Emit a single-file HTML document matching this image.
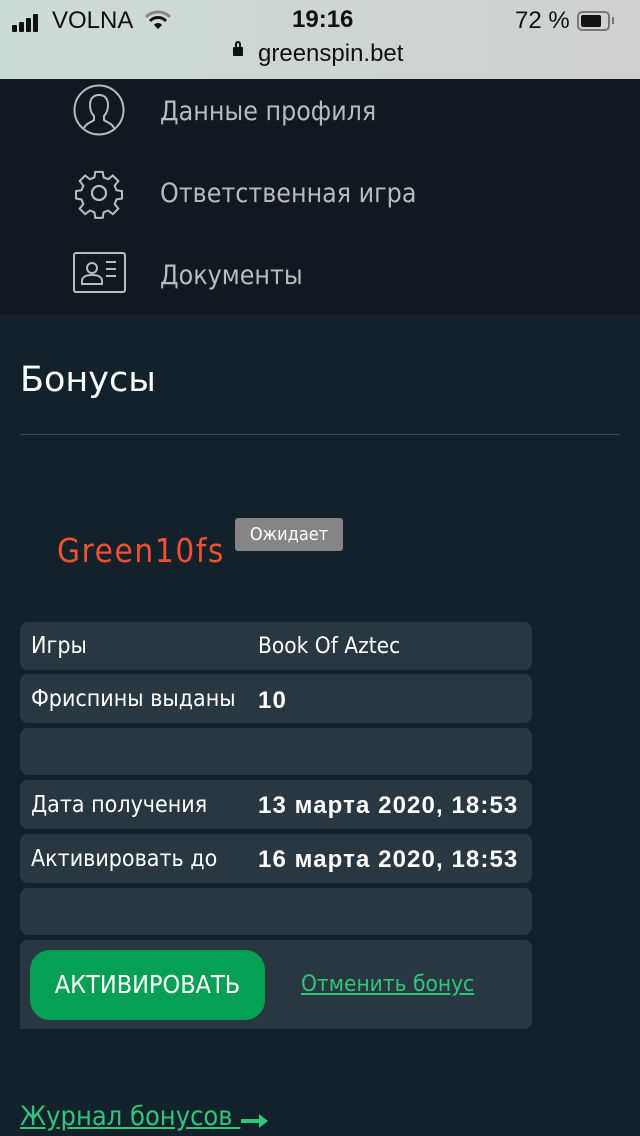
<!DOCTYPE html>
<html><head><meta charset="utf-8"><style>
*{margin:0;padding:0;box-sizing:border-box}
body{width:640px;height:1136px;overflow:hidden;background:#12212a;font-family:"Liberation Sans","DejaVu Sans",sans-serif;position:relative;color:#fff}
.status{position:absolute;left:0;top:0;width:640px;height:79px;background:linear-gradient(90deg,#cddbd6,#d0d0d0);color:#111}
.menu{position:absolute;top:79px;left:0;width:640px;height:235px;background:#111820}
.mi{position:absolute;left:160px;font-family:"DejaVu Sans Condensed","DejaVu Sans",sans-serif;font-size:26.5px;color:#b8bcbf}
.ico{position:absolute;left:73px}
.row{position:absolute;left:20px;width:512px;background:#293740;border-radius:8px}
.lab{position:absolute;left:11px;font-family:"DejaVu Sans Condensed",sans-serif;font-size:23px;color:#fff}
.val{position:absolute;left:238px;font-size:22px;color:#fff;white-space:nowrap}
.b{font-weight:bold;font-family:"Liberation Sans",sans-serif;font-size:24px;letter-spacing:1.1px}
a{color:#2fc57c;text-decoration:underline}
</style></head><body>
<div class="status">
 <div style="position:absolute;left:12px;top:14px;display:flex;align-items:flex-end;gap:2px">
  <div style="width:5px;height:7px;background:#111;border-radius:1px"></div><div style="width:5px;height:10px;background:#111;border-radius:1px"></div><div style="width:5px;height:14px;background:#111;border-radius:1px"></div><div style="width:5px;height:18px;background:#111;border-radius:1px"></div></div>
 <div style="position:absolute;left:52px;top:7px;font-size:24px">VOLNA</div>
 <svg style="position:absolute;left:145px;top:10px" width="26" height="20" viewBox="0 0 26 20"><path d="M1 7a17 17 0 0 1 24 0" stroke="#888" stroke-width="3" fill="none"/><path d="M5 11a11 11 0 0 1 16 0" stroke="#111" stroke-width="3" fill="none"/><path d="M9 15a5 5 0 0 1 8 0L13 19z" fill="#111"/></svg>
 <div style="position:absolute;left:292px;top:6px;font-size:24px;font-weight:bold">19:16</div>
 <div style="position:absolute;left:515px;top:7px;font-size:24px">72 %</div>
 <div style="position:absolute;left:577px;top:11px;width:33px;height:20px;border:2px solid #777;border-radius:5px;padding:2px"><div style="width:20px;height:12px;background:#111;border-radius:2px"></div></div>
 <div style="position:absolute;left:612px;top:17px;width:2px;height:7px;background:#777"></div>
 <div style="position:absolute;left:233px;top:47px;width:10px;height:9px;background:#111;border-radius:1px"></div>
 <div style="position:absolute;left:235px;top:41px;width:6px;height:8px;border:2px solid #111;border-bottom:none;border-radius:3px 3px 0 0"></div>
 <div style="position:absolute;left:258px;top:40px;font-size:24px">greenspin.bet</div>
</div>
<div class="menu">
 <svg class="ico" style="top:5px" width="52" height="52" viewBox="0 0 52 52" fill="none" stroke="#b8bcbf" stroke-width="2"><circle cx="26" cy="26" r="24.5"/><path d="M11 44c2-5 8-6 10-8v-4c-3-3-4-7-4-11 0-7 4-10 9-10s9 3 9 10c0 4-1 8-4 11v4c2 2 8 3 10 8"/></svg>
 <div class="mi" style="top:17px">Данные профиля</div>
 <svg class="ico" style="top:88px" width="52" height="52" viewBox="0 0 52 52" fill="none" stroke="#b8bcbf" stroke-width="2.2"><path d="M22 3h8l1 6 5 2 5-4 6 6-4 5 2 5 6 1v8l-6 1-2 5 4 5-6 6-5-4-5 2-1 6h-8l-1-6-5-2-5 4-6-6 4-5-2-5-6-1v-8l6-1 2-5-4-5 6-6 5 4 5-2z" transform="translate(26 26) scale(.92) translate(-26 -26)"/><circle cx="26" cy="26" r="7"/></svg>
 <div class="mi" style="top:99px">Ответственная игра</div>
 <svg class="ico" style="top:173px" width="53" height="41" viewBox="0 0 53 41" fill="none" stroke="#b8bcbf" stroke-width="2"><rect x="1" y="1" width="51" height="39" rx="2"/><circle cx="19" cy="16" r="5"/><path d="M9 32v-3c0-4 4-6 10-6s10 2 10 6v3z"/><path d="M33 10h10M33 17h10M33 24h10"/></svg>
 <div class="mi" style="top:181px">Документы</div>
</div>
<div style="position:absolute;left:20px;top:360px;font-family:'DejaVu Sans',sans-serif;font-size:35px">Бонусы</div>
<div style="position:absolute;left:20px;top:434px;width:600px;height:1px;background:#3a4a52"></div>
<div style="position:absolute;left:57px;top:531px;font-family:'DejaVu Sans Condensed',sans-serif;font-size:33px;letter-spacing:1.6px;color:#f2512f">Green10fs</div>
<div style="position:absolute;left:235px;top:518px;width:108px;height:33px;background:#858585;border-radius:3px;font-family:'DejaVu Sans Condensed',sans-serif;font-size:18px;text-align:center;line-height:33px">Ожидает</div>
<div class="row" style="top:622px;height:48px"><div class="lab" style="top:11px">Игры</div><div class="val" style="top:11px;font-family:'DejaVu Sans Condensed',sans-serif;font-size:22.5px">Book Of Aztec</div></div>
<div class="row" style="top:674px;height:49px"><div class="lab" style="top:12px">Фриспины выданы</div><div class="val b" style="top:13px">10</div></div>
<div class="row" style="top:728px;height:47px"></div>
<div class="row" style="top:780px;height:49px"><div class="lab" style="top:12px">Дата получения</div><div class="val b" style="top:12px">13 марта 2020, 18:53</div></div>
<div class="row" style="top:834px;height:49px"><div class="lab" style="top:12px">Активировать до</div><div class="val b" style="top:12px">16 марта 2020, 18:53</div></div>
<div class="row" style="top:888px;height:47px"></div>
<div class="row" style="top:940px;height:89px;border-radius:8px 8px 8px 0">
 <div style="position:absolute;left:10px;top:10px;width:235px;height:70px;background:#06a055;border-radius:20px;text-align:center;line-height:70px;font-family:'DejaVu Sans Condensed',sans-serif;font-size:25px">АКТИВИРОВАТЬ</div>
 <a style="position:absolute;left:281px;top:31px;font-family:'DejaVu Sans Condensed',sans-serif;font-size:22.5px">Отменить бонус</a>
</div>
<a style="position:absolute;left:20px;top:1101px;font-family:'DejaVu Sans Condensed',sans-serif;font-size:27px">Журнал бонусов&nbsp;</a>
<svg style="position:absolute;left:241px;top:1113px" width="28" height="16" viewBox="0 0 28 16"><path d="M0 8h20" stroke="#2fc57c" stroke-width="4"/><path d="M18 1l9 7-9 7z" fill="#2fc57c"/></svg>
</body></html>
